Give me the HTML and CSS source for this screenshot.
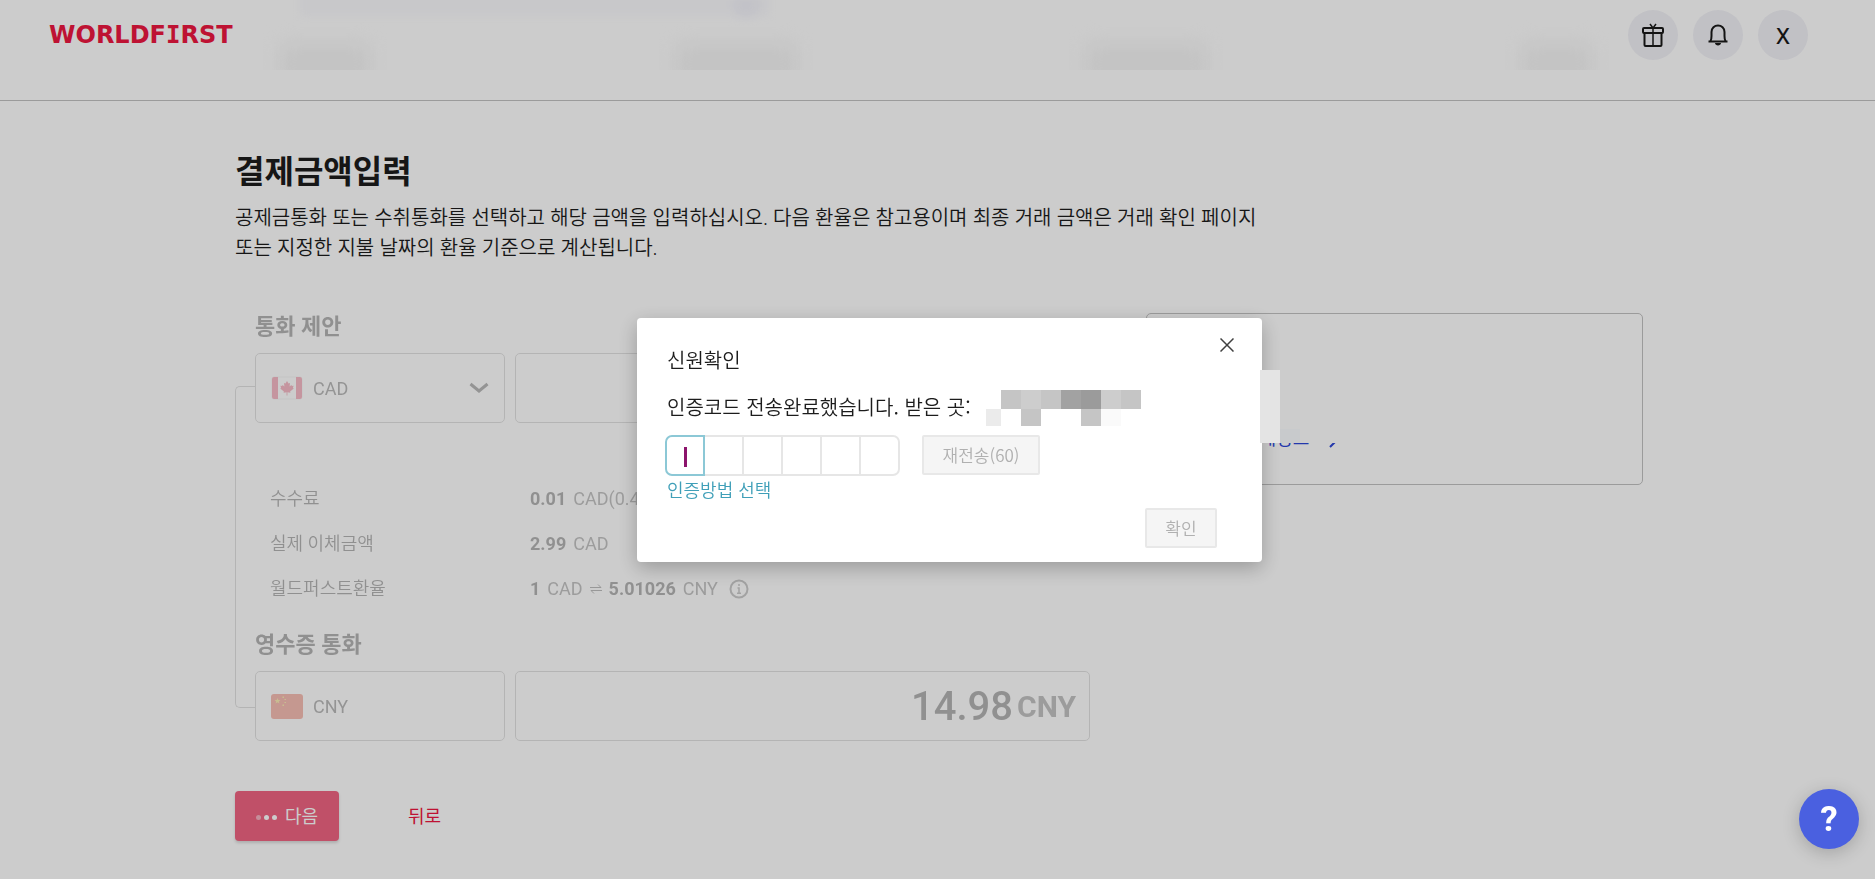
FILE: index.html
```html
<!DOCTYPE html>
<html lang="ko">
<head>
    <meta charset="UTF-8">
    <meta name="viewport" content="width=device-width, initial-scale=1.0">
    <title>WorldFirst - 결제금액입력</title>
    <link rel="stylesheet" href="styles.css">
</head>
<body>
    <header class="header">
        <div class="steps-blur" aria-hidden="true">
            <div class="steps-progress"></div>
            <div class="step"></div>
            <div class="step step-wide"></div>
            <div class="step step-wide"></div>
            <div class="step step-short"></div>
        </div>
        <a class="logo" href="#">WORLDF<span class="logo-i">I</span>RST</a>
        <nav class="header-actions">
            <button class="round-btn" type="button" aria-label="선물">
                <svg width="24" height="24" viewBox="0 0 24 24" fill="none" stroke="#1a1a1a" stroke-width="2">
                    <rect x="2" y="5" width="20" height="5" rx="1"/>
                    <path d="M3.500 10v12a1 1 0 0 0 1 1h15a1 1 0 0 0 1-1V10"/>
                    <path d="M12 5v18M9 1l3 4 3-4" stroke-width="1.500"/>
                </svg>
            </button>
            <button class="round-btn" type="button" aria-label="알림">
                <svg width="24" height="24" viewBox="0 0 24 24" fill="none" stroke="#1a1a1a" stroke-width="2">
                    <path d="M2.500 18.500h19M4.500 18c1-1.500 1-3 1-5V9C5.500 5 8.500 2.500 12 2.500S18.500 5 18.500 9v4c0 2 0 3.500 1 5"/>
                    <path d="M9 20h6c0 1.500-1.500 2.500-3 2.500S9 21.500 9 20z" fill="#1a1a1a" stroke="none"/>
                </svg>
            </button>
            <button class="round-btn" type="button">X</button>
        </nav>
    </header>

    <main class="main">
        <h1>결제금액입력</h1>
        <p class="intro">공제금통화 또는 수취통화를 선택하고 해당 금액을 입력하십시오. 다음 환율은 참고용이며 최종 거래 금액은 거래 확인 페이지<br>또는 지정한 지불 날짜의 환율 기준으로 계산됩니다.</p>

        <div class="columns">
            <form class="exchange">
                <div class="bracket"></div>
                <div class="exchange-body">
                    <h2 id="offer">통화 제안</h2>
                    <div class="amount-row">
                        <div class="box currency">
                            <svg class="flag" width="32" height="24" viewBox="0 0 32 24">
                                <rect x="1" y="1" width="30" height="22" rx="2" fill="#fff" stroke="#eee"/>
                                <path d="M3 1h4v22H3a2 2 0 0 1-2-2V3a2 2 0 0 1 2-2zM25 1h4a2 2 0 0 1 2 2v18a2 2 0 0 1-2 2h-4z" fill="#f07a90"/>
                                <path d="M16 5l1.500 2.600 1.500-.7-.4 3.600 1.800-1.600.5 1.100 1.700-.2-.7 2.100.9.700-3.700 2.800.3 1.300-3-.4V19.500h-.8v-3.200l-3 .4.3-1.300-3.700-2.800.9-.7-.7-2.100 1.700.2.500-1.100 1.800 1.600-.4-3.600 1.500.7z" fill="#f07a90"/>
                            </svg>
                            <select aria-labelledby="offer">
                                <option>CAD</option>
                                <option>USD</option>
                            </select>
                            <svg class="chevron" width="20" height="12" viewBox="0 0 20 12" fill="none" stroke="#757575" stroke-width="3">
                                <path d="M1.500 2l8.500 7 8.500-7"/>
                            </svg>
                        </div>
                        <div class="box amount">
                            <input type="text" value="3.00" aria-label="통화 제안 금액">
                            <span class="unit">CAD</span>
                        </div>
                    </div>

                    <dl class="rates">
                        <dt>수수료</dt>
                        <dd><b>0.01</b> <span>CAD(0.4%)</span></dd>
                        <dt>실제 이체금액</dt>
                        <dd><b>2.99</b> <span>CAD</span></dd>
                        <dt>월드퍼스트환율</dt>
                        <dd>
                            <b>1</b> <span>CAD</span>
                            <svg width="12" height="12" viewBox="0 0 12 12" fill="none" stroke="#808080">
                                <path d="M0 4.500h11L8 1.500M12 7.500H1l3 3"/>
                            </svg>
                            <b>5.01026</b> <span>CNY</span>
                            <svg class="info" width="20" height="20" viewBox="0 0 20 20" fill="none" stroke="#999" stroke-width="2">
                                <circle cx="10" cy="10" r="8.500"/>
                                <path d="M8.500 9H10v5M8 14.200h4M10 5v2" stroke-width="1.500"/>
                            </svg>
                        </dd>
                    </dl>

                    <h2>영수증 통화</h2>
                    <div class="amount-row">
                        <div class="box currency">
                            <svg class="flag" width="32" height="25" viewBox="0 0 32 25">
                                <rect width="32" height="25" rx="3" fill="#f0806c"/>
                                <path d="M6.500 4l.8 2h2.100l-1.600 1.400.6 2.200-1.900-1.300-1.900 1.300.6-2.200L3.600 6h2.100z" fill="#f8dc70"/>
                                <path d="M11.500 2.500H13v1.500h-1.500zM13.500 5H15v1h-1.500zM13.500 8H15v1h-1.500zM11.500 10.500H13V12h-1.500z" fill="#f8dc70"/>
                            </svg>
                            <span class="code">CNY</span>
                        </div>
                        <div class="box amount">
                            <input type="text" value="14.98" aria-label="영수증 통화 금액">
                            <span class="unit">CNY</span>
                        </div>
                    </div>
                </div>
            </form>

            <aside class="card">
                <a class="card-link" href="#">
                    <span>상세정보</span>
                    <svg width="8" height="14" viewBox="0 0 8 14" fill="none" stroke="#2d47d8" stroke-width="2"><path d="M1 0l6 5-6 6"/></svg>
                </a>
            </aside>
        </div>

        <div class="actions">
            <button class="next-btn" type="button"><span class="dots"><i></i><i></i><i></i></span>다음</button>
            <a class="back-link" href="#">뒤로</a>
        </div>
    </main>

    <div class="overlay">
        <section class="modal" role="dialog" aria-labelledby="modal-title">
            <button class="close-btn" type="button" aria-label="닫기">
                <svg width="14" height="14" viewBox="0 0 14 14" fill="none" stroke="#404040" stroke-width="1.500"><path d="M0.500 0.500l13 13M13.500 0.500l-13 13"/></svg>
            </button>
            <h3 id="modal-title">신원확인</h3>
            <div class="sent">
                <span>인증코드 전송완료했습니다. 받은 곳:</span>
                <div class="mosaic">
                    <i></i><i class="m3"></i><i class="m2"></i><i class="m3"></i><i class="m5"></i><i class="m6"></i><i class="m2"></i><i class="m3"></i>
                    <i class="m1"></i><i></i><i class="m3"></i><i></i><i></i><i class="m3"></i><i class="m0"></i><i></i>
                </div>
            </div>
            <div class="code-row">
                <div class="code-inputs">
                    <span class="cell active"><input type="text" maxlength="1" aria-label="인증코드 1"></span>
                    <span class="cell"><input type="text" maxlength="1" aria-label="인증코드 2"></span>
                    <span class="cell"><input type="text" maxlength="1" aria-label="인증코드 3"></span>
                    <span class="cell"><input type="text" maxlength="1" aria-label="인증코드 4"></span>
                    <span class="cell"><input type="text" maxlength="1" aria-label="인증코드 5"></span>
                    <span class="cell"><input type="text" maxlength="1" aria-label="인증코드 6"></span>
                </div>
                <button class="gray-btn resend" type="button" disabled>재전송(60)</button>
            </div>
            <a class="method-link" href="#">인증방법 선택</a>
            <button class="gray-btn confirm" type="button" disabled>확인</button>
            <div class="edge-block"></div>
            <div class="edge-shade"></div>
        </section>
    </div>

    <button class="help-btn" type="button" aria-label="도움말">?</button>
</body>
</html>
```

FILE: styles.css
```css
* {
    box-sizing: border-box;
}
body {
    margin: 0;
    background: #fff;
    color: #1c1c1c;
    font-family: Roboto, "Noto Sans CJK KR", sans-serif;
    font-size: 18px;
}
h1, h2, h3, p, dl, dd {
    margin: 0;
}
a {
    text-decoration: none;
}
button, input, select {
    font-family: inherit;
    border: none;
    padding: 0;
}
svg {
    flex: none;
}

/* header */
.header {
    position: relative;
    display: flex;
    justify-content: space-between;
    align-items: center;
    padding: 10px 67px 40px 49px;
    border-bottom: 1px solid #c2c2c2;
}
.steps-blur {
    position: absolute;
    top: 0;
    left: 0;
    right: 0;
    height: 70px;
    padding: 44px 113px 0 120px;
    overflow: hidden;
    display: grid;
    grid-template-columns: repeat(4, 1fr);
    justify-items: center;
}
.step {
    width: 90px;
    height: 40px;
    background: #f5f5f5;
    filter: blur(10px);
}
.step-wide {
    width: 120px;
}
.step-short {
    width: 70px;
}
.steps-progress {
    position: absolute;
    top: -8px;
    left: 16%;
    width: 25%;
    height: 24px;
    background: #fafafd;
    filter: blur(5px);
}
.steps-progress::after {
    content: "";
    position: absolute;
    right: 10px;
    top: 4px;
    width: 26px;
    height: 22px;
    border-radius: 50%;
    background: #f3f3fb;
}
.logo {
    position: relative;
    color: #ee1740;
    font: bold 24px/30px "DejaVu Sans", sans-serif;
}
.logo-i {
    font-family: "DejaVu Sans Mono", monospace;
}
.header-actions {
    position: relative;
    display: flex;
    gap: 15px;
}
.round-btn {
    display: flex;
    align-items: center;
    justify-content: center;
    width: 50px;
    height: 50px;
    border-radius: 50%;
    background: #f2f2f7;
    color: #1a1a1a;
    font-family: "Noto Sans", sans-serif;
    font-size: 22px;
    font-weight: 500;
}

/* payment form */
.main {
    padding: 49px 232px 38px 235px;
}
h1 {
    font-size: 32px;
    line-height: 44px;
}
.intro {
    margin-top: 9px;
    font-family: "Noto Sans", "Noto Sans CJK KR", sans-serif;
    font-size: 20px;
    font-weight: 350;
    line-height: 30px;
}
.columns {
    display: grid;
    grid-template-columns: minmax(0, 855fr) minmax(0, 497fr);
    gap: 56px;
    align-items: start;
    margin-top: 50px;
}
.exchange {
    display: flex;
    opacity: 0.5;
}
.bracket {
    width: 20px;
    margin: 73px 0 33px;
    border: 1px solid #c6c6c6;
    border-right: none;
    border-radius: 5px 0 0 5px;
}
.exchange-body {
    flex: 1;
}
h2 {
    color: #6d6d6d;
    font-size: 22px;
    font-weight: bold;
    line-height: 28px;
    margin-bottom: 12px;
}
.amount-row {
    display: grid;
    grid-template-columns: 250px 1fr;
    gap: 10px;
}
.box {
    display: flex;
    align-items: center;
    height: 70px;
    padding: 0 15px;
    border: 1px solid #c6c6c6;
    border-radius: 5px;
}
.currency select, .code {
    flex: 1;
    margin-left: 10px;
    appearance: none;
    background: none;
    color: #757575;
    font-size: 18px;
    opacity: 1;
}
.amount {
    padding: 0 13px;
}
.amount input {
    flex: 1;
    width: 0;
    background: none;
    color: #6d6d6d;
    font-size: 40px;
    font-weight: 500;
    text-align: right;
}
.unit {
    margin-left: 4px;
    color: #8a8a8a;
    font-size: 30px;
    font-weight: bold;
}
.rates {
    display: grid;
    grid-template-columns: 260px 1fr;
    margin: 53px 0 20px;
    padding-left: 15px;
    color: #6d6d6d;
    line-height: 45px;
}
.rates dt {
    font-weight: 350;
}
.rates dd {
    display: flex;
    align-items: center;
    gap: 7px;
}
.rates dd span {
    color: #8a8a8a;
}
.rates .info {
    margin-left: 4px;
}
.card {
    height: 172px;
    padding: 114px 96px 0;
    border: 1px solid #c2c2c2;
    border-radius: 5px;
}
.card-link {
    position: relative;
    display: flex;
    align-items: flex-end;
    gap: 20px;
    color: #2d47d8;
    line-height: 22px;
}
.card-link::before {
    content: "";
    position: absolute;
    inset: 0 0 7px;
    background: #fff;
}
.actions {
    display: flex;
    align-items: center;
    gap: 69px;
    margin-top: 50px;
}
.next-btn {
    display: flex;
    align-items: center;
    justify-content: center;
    gap: 8px;
    width: 104px;
    height: 50px;
    padding-bottom: 2px;
    border-radius: 4px;
    background: #f06482;
    box-shadow: 0 2px 3px rgba(0, 0, 0, 0.15);
    color: #fff;
    font-size: 18px;
}
.dots {
    display: flex;
    gap: 3px;
    margin-top: 4px;
}
.dots i {
    width: 5px;
    height: 5px;
    border-radius: 50%;
    background: #fff;
}
.dots i:first-child {
    opacity: 0.5;
}
.back-link {
    padding-bottom: 2px;
    color: #ee1740;
}

/* verification dialog */
.overlay {
    position: fixed;
    inset: 0;
    display: flex;
    align-items: center;
    justify-content: center;
    padding-left: 24px;
    background: rgba(0, 0, 0, 0.2);
}
.modal {
    position: relative;
    display: flex;
    flex-direction: column;
    align-items: flex-start;
    width: 625px;
    padding: 28px 45px 14px 28px;
    border-radius: 4px;
    background: #fff;
    box-shadow: 0 6px 20px rgba(0, 0, 0, 0.25);
    font-family: "Noto Sans CJK KR", sans-serif;
}
.modal h3, .sent, .method-link {
    margin-left: 2px;
    font-size: 20px;
    font-weight: 350;
    line-height: 28px;
}
.close-btn {
    position: absolute;
    top: 20px;
    right: 28px;
    display: flex;
    background: none;
}
.sent {
    display: flex;
    align-items: flex-start;
    gap: 15px;
    margin-top: 19px;
}
.mosaic {
    display: grid;
    grid-template-columns: 15px repeat(7, 20px);
    grid-template-rows: 19px 17px;
    margin: -3px 0 -5px;
}
.m0 { background: #fafafa; }
.m1 { background: #ebebeb; }
.m2 { background: #cdcdcd; }
.m3 { background: #c5c5c5; }
.m5 { background: #a2a2a2; }
.m6 { background: #9b9b9b; }
.code-row {
    display: flex;
    gap: 22px;
    margin-top: 14px;
}
.code-inputs {
    display: flex;
}
.cell {
    position: relative;
    width: 39px;
    height: 41px;
    border: solid #e6e6e6;
    border-width: 2px 2px 2px 0;
}
.cell:last-child {
    border-radius: 0 7px 7px 0;
}
.cell.active {
    width: 40px;
    border: 2px solid #8cc8d6;
    border-radius: 7px 0 0 7px;
}
.cell.active::after {
    content: "";
    position: absolute;
    top: 10px;
    left: 17px;
    width: 3px;
    height: 20px;
    background: #8c146c;
}
.cell input {
    width: 100%;
    height: 100%;
    background: none;
    font-size: 18px;
    text-align: center;
}
.gray-btn {
    height: 40px;
    border: 2px solid #e8e8e8;
    border-radius: 2px;
    background: #f5f5f5;
    color: #b0b0b0;
    font-size: 17px;
    font-weight: 350;
}
.resend {
    width: 118px;
}
.confirm {
    align-self: flex-end;
    width: 72px;
    margin-top: 7px;
}
.method-link {
    margin-top: 1px;
    color: #3f9fb8;
    font-size: 18px;
    line-height: 24px;
}
.edge-block {
    position: absolute;
    top: 52px;
    right: -18px;
    width: 20px;
    height: 73px;
    background: #e4e4e4;
}
.edge-shade {
    position: absolute;
    top: 111px;
    right: -38px;
    width: 20px;
    height: 14px;
    background: #c8cacc;
}

.help-btn {
    position: fixed;
    right: 16px;
    bottom: 30px;
    width: 60px;
    height: 60px;
    border-radius: 50%;
    background: #4a60e0;
    box-shadow: 0 4px 18px rgba(0, 0, 0, 0.2);
    color: #fff;
    font-size: 35px;
    font-weight: bold;
}
```
